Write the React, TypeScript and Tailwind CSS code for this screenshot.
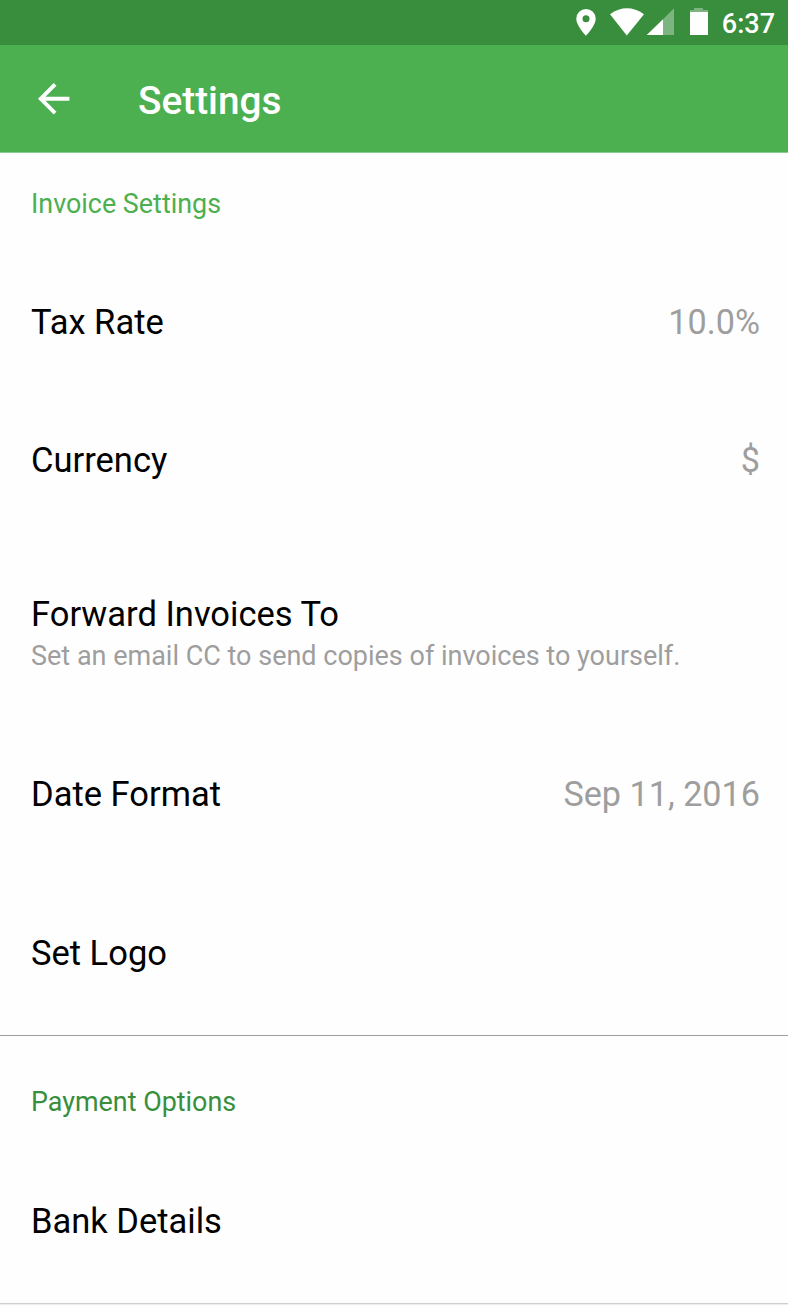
type RowProps = {
  title: string;
  value?: string;
  hint?: string;
  className: string;
};

function Row({ title, value, hint, className }: RowProps) {
  return (
    <div className={`flex items-center justify-between pl-[31px] pr-[28px] ${className}`}>
      <div>
        <div className="text-[34.5px] leading-[42px] text-black">{title}</div>
        {hint && <div className="text-[27px] leading-[42px] text-[#9e9e9e]">{hint}</div>}
      </div>
      {value && <div className="text-[34.2px] leading-[42px] text-[#9e9e9e]">{value}</div>}
    </div>
  );
}

function StatusBar() {
  return (
    <div className="flex h-[45px] items-center justify-end bg-[#388e3c] pr-[13px] text-white">
      <svg width="136" height="45" viewBox="574 0 136 45" fill="currentColor">
        <path fillRule="evenodd" d="M586 9a9.700 9.700 0 0 0-9.700 9.700c0 7 9.700 17 9.700 17s9.700-10 9.700-17A9.700 9.700 0 0 0 586 9zm0 13.200a3.500 3.500 0 1 1 0-7 3.500 3.500 0 0 1 0 7z" />
        <path d="M610 14.200Q627 2.500 644 14.200L626.800 35.500z" />
        <path d="M674 8.300V35h-11V19.300z" opacity=".35" />
        <path d="M663 19.300V35h-16.300z" />
        <path d="M690 12V10h4V8h9v2h5v2z" opacity=".35" />
        <path d="M690 12h18v23h-18z" />
      </svg>
      <span className="ml-[12px] mt-[3px] text-[27px] font-medium leading-none">6:37</span>
    </div>
  );
}

function AppBar() {
  return (
    <header className="flex h-[108px] items-center border-b border-[#8ccb8f] bg-[#4caf50] pl-[38px] text-white">
      <svg width="32" height="32" viewBox="4 4 16.300 16.300" fill="currentColor">
        <path d="M20 11H7.830l5.590-5.590L12 4l-8 8 8 8 1.410-1.410L7.830 13H20v-2z" />
      </svg>
      <h1 className="ml-[68px] mt-[6px] text-[38.8px] font-medium leading-none">Settings</h1>
    </header>
  );
}

export default function App() {
  return (
    <div className="h-[1308px] w-[788px] overflow-hidden bg-[#fefefe] font-['Roboto',sans-serif]">
      <StatusBar />
      <AppBar />
      <section className="border-b border-[#9e9e9e]">
        <h2 className="h-[101px] pl-[31px] pt-[31px] text-[26.9px] leading-[40px] text-[#4caf50]">Invoice Settings</h2>
        <Row title="Tax Rate" value="10.0%" className="h-[138px] pb-[2px]" />
        <Row title="Currency" value="$" className="h-[138px] pb-[2px]" />
        <Row title="Forward Invoices To" hint="Set an email CC to send copies of invoices to yourself." className="h-[210px]" />
        <Row title="Date Format" value="Sep 11, 2016" className="mb-[21px] h-[111px] pb-[3px]" />
        <Row title="Set Logo" className="h-[163px] pb-[2px]" />
      </section>
      <section className="border-b border-[#cfcfcf] shadow-[0_1px_0_#ededed]">
        <h2 className="h-[104px] pl-[31px] pt-[46px] text-[26.9px] leading-[40px] text-[#388e3c]">Payment Options</h2>
        <Row title="Bank Details" className="h-[163px] pb-[2px]" />
      </section>
    </div>
  );
}
